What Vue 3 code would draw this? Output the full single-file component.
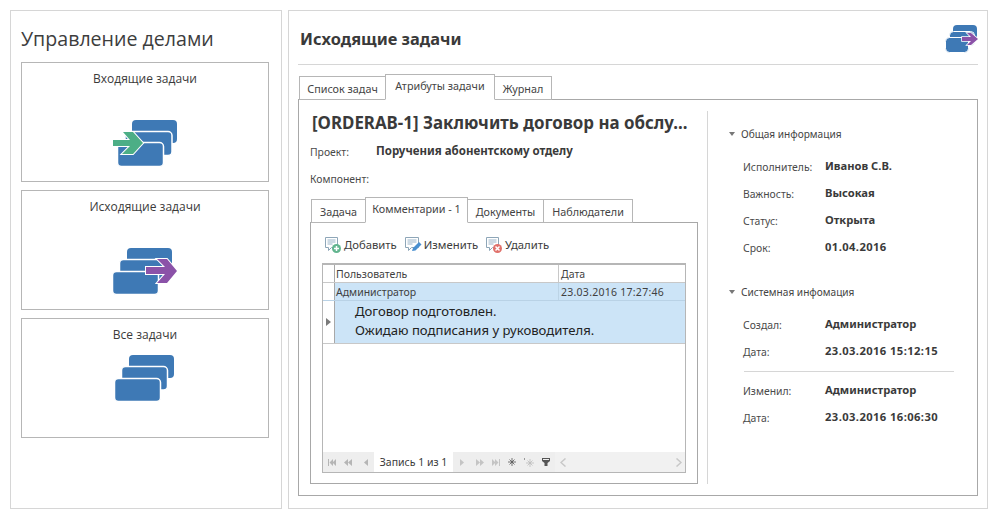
<script setup>
const mainTabs = [
  { label: 'Список задач', w: 87 },
  { label: 'Атрибуты задачи', w: 110, active: true },
  { label: 'Журнал', w: 58 }
]
const innerTabs = [
  { label: 'Задача', w: 55 },
  { label: 'Комментарии - 1', w: 103, active: true },
  { label: 'Документы', w: 77 },
  { label: 'Наблюдатели', w: 90 }
]
const general = [
  ['Исполнитель:', 'Иванов С.В.'],
  ['Важность:', 'Высокая'],
  ['Статус:', 'Открыта'],
  ['Срок:', '01.04.2016', true]
]
const created = [
  ['Создал:', 'Администратор'],
  ['Дата:', '23.03.2016 15:12:15', true]
]
const changed = [
  ['Изменил:', 'Администратор'],
  ['Дата:', '23.03.2016 16:06:30', true]
]
</script>

<template>
  <div class="page">
    <aside class="side">
      <h1 class="side-title">Управление делами</h1>
      <div class="card">
        <div class="card-title">Входящие задачи</div>
        <svg class="card-icon" width="66" height="50" viewBox="112 118 66 50">
          <rect x="132" y="120" width="45" height="23" rx="4" fill="#3e79b5" />
          <rect x="125" y="131.5" width="47" height="24" rx="4" fill="#3e79b5" stroke="#fff" stroke-width="1.5" />
          <rect x="117.5" y="142.5" width="46" height="24" rx="4" fill="#3e79b5" stroke="#fff" stroke-width="1.5" />
          <polygon points="113,140 130,140 123,132 133,132 143,143 133,154 122,154 130,146 113,146" fill="#4cae86" stroke="#fff" stroke-width="2" paint-order="stroke" stroke-linejoin="miter" />
        </svg>
      </div>
      <div class="card">
        <div class="card-title">Исходящие задачи</div>
        <svg class="card-icon" width="66" height="50" viewBox="112 246 66 50">
          <rect x="127" y="248" width="45" height="23" rx="4" fill="#3e79b5" />
          <rect x="119.5" y="259.5" width="46" height="24" rx="4" fill="#3e79b5" stroke="#fff" stroke-width="1.5" />
          <rect x="112.5" y="271.5" width="46" height="23" rx="4" fill="#3e79b5" stroke="#fff" stroke-width="1.5" />
          <polygon points="146,267 165,267 157,259 167,259 177,271 167,283 157,283 165,274 146,274" fill="#8b52a8" stroke="#fff" stroke-width="2" paint-order="stroke" />
        </svg>
      </div>
      <div class="card card-all">
        <div class="card-title">Все задачи</div>
        <svg class="card-icon" width="62" height="48" viewBox="114 354 62 48">
          <rect x="129" y="355" width="45" height="23" rx="4" fill="#3e79b5" />
          <rect x="121.5" y="366.5" width="46" height="23.500" rx="4" fill="#3e79b5" stroke="#fff" stroke-width="1.5" />
          <rect x="114.500" y="378.500" width="46" height="23" rx="4" fill="#3e79b5" stroke="#fff" stroke-width="1.5" />
        </svg>
      </div>
    </aside>

    <main class="content">
      <header class="head">
        <h2 class="head-title">Исходящие задачи</h2>
        <svg width="33" height="28" viewBox="945 25 33 28">
          <rect x="953" y="25" width="24" height="14" rx="4" fill="#3e79b5" />
          <rect x="949.500" y="31.500" width="25" height="14" rx="4" fill="#3e79b5" stroke="#fff" />
          <rect x="945.500" y="37.500" width="23" height="15" rx="4" fill="#3e79b5" stroke="#fff" />
          <polygon points="962,37 971,37 967,33 971,33 978,39 971,45 967,45 971,41 962,41" fill="#8b52a8" stroke="#fff" stroke-width="1.500" paint-order="stroke" />
        </svg>
      </header>

      <nav class="tabs">
        <div v-for="t in mainTabs" :key="t.label" class="tab" :class="{ on: t.active }" :style="{ width: t.w + 'px' }">{{ t.label }}</div>
      </nav>

      <section class="panel">
        <div class="task">
          <h3 class="task-title">[ORDERAB-1] Заключить договор на обслу...</h3>
          <div class="prop prop-project">
            <span class="prop-label">Проект:</span>
            <b class="prop-value">Поручения абонентскому отделу</b>
          </div>
          <div class="prop prop-component">
            <span class="prop-label">Компонент:</span>
          </div>

          <nav class="tabs tabs-inner">
            <div v-for="t in innerTabs" :key="t.label" class="tab" :class="{ on: t.active }" :style="{ width: t.w + 'px' }">{{ t.label }}</div>
          </nav>
          <div class="inner-panel">
            <div class="toolbar">
              <span class="tool">
                <svg width="18" height="18" viewBox="0 0 18 18">
                  <path d="M1.500 1.500h12v10h-6l-3 3v-3h-3z" fill="#fff" stroke="#8ea6b8" />
                  <path d="M3.500 4h8M3.500 6h8M3.500 8h5" stroke="#9bb4c8" />
                  <circle cx="12.500" cy="12.500" r="4.500" fill="#63b58f" />
                  <path d="M10 12.500h5M12.500 10v5" stroke="#fff" stroke-width="1.500" />
                </svg>
                Добавить
              </span>
              <span class="tool">
                <svg width="18" height="18" viewBox="0 0 18 18">
                  <path d="M1.500 1.500h13v10h-7l-3 3v-3h-3z" fill="#fff" stroke="#8ea6b8" />
                  <path d="M3.500 4h9M3.500 6h9M3.500 8h5" stroke="#9bb4c8" />
                  <path d="M8 15l1-3 6-6 2.500 2.500-6 6z" fill="#4a90d0" />
                </svg>
                Изменить
              </span>
              <span class="tool">
                <svg width="18" height="18" viewBox="0 0 18 18">
                  <path d="M1.500 1.500h12v10h-6l-3 3v-3h-3z" fill="#fff" stroke="#8ea6b8" />
                  <path d="M3.500 4h8M3.500 6h8M3.500 8h5" stroke="#9bb4c8" />
                  <circle cx="12.500" cy="12.500" r="4.500" fill="#e0716b" />
                  <path d="M10.500 10.500l4 4M14.500 10.500l-4 4" stroke="#fff" stroke-width="1.500" />
                </svg>
                Удалить
              </span>
            </div>

            <div class="grid">
              <div class="grid-head">
                <div class="ind"></div>
                <div class="col-user">Пользователь</div>
                <div class="col-date">Дата</div>
              </div>
              <div class="grid-row">
                <div class="ind"></div>
                <div class="col-user">Администратор</div>
                <div class="col-date">23.03.2016 17:27:46</div>
              </div>
              <div class="grid-detail">
                <div class="ind ind-cur">
                  <svg width="5" height="8" viewBox="0 0 5 8"><path d="M0 0l5 4-5 4z" fill="#7a7a7a" /></svg>
                </div>
                <div class="detail-text">
                  <div>Договор подготовлен.</div>
                  <div>Ожидаю подписания у руководителя.</div>
                </div>
              </div>
              <div class="grid-space"></div>
              <div class="pager">
                <div class="pager-btns">
                  <svg width="8" height="7" viewBox="0 0 8 7"><path d="M0 0h1v7H0zM5 0v7L1.500 3.500zM8 0v7L4.500 3.500z" fill="#b5b5b5" /></svg>
                  <svg width="8" height="7" viewBox="0 0 8 7"><path d="M4 0v7L0 3.500zM8 0v7L4 3.500z" fill="#b5b5b5" /></svg>
                  <svg class="pg-far" width="4" height="7" viewBox="0 0 4 7"><path d="M4 0v7L0 3.500z" fill="#b5b5b5" /></svg>
                </div>
                <div class="pager-info">Запись 1 из 1</div>
                <div class="pager-btns pager-btns-r">
                  <svg class="pg-next" width="4" height="7" viewBox="0 0 4 7"><path d="M0 0v7l4-3.500z" fill="#c4c4c4" /></svg>
                  <svg width="8" height="7" viewBox="0 0 8 7"><path d="M0 0v7l4-3.500zM4 0v7l4-3.500z" fill="#c4c4c4" /></svg>
                  <svg width="8" height="7" viewBox="0 0 8 7"><path d="M0 0v7l3.500-3.500zM3 0v7l3.500-3.500zM7 0h1v7H7z" fill="#c4c4c4" /></svg>
                  <svg width="8" height="8" viewBox="0 0 8 8"><path d="M4 0v8M0 4h8M1.500 1.500l5 5M6.500 1.500l-5 5" stroke="#555" stroke-width=".8" /></svg>
                  <svg width="10" height="9" viewBox="0 0 10 9"><path d="M6 1v8M2 5h8M3.500 2.500l5 5M8.500 2.500l-5 5" stroke="#bbb" stroke-width=".8" /><path d="M.5 0v2" stroke="#999" /></svg>
                  <svg width="8" height="8" viewBox="0 0 8 8"><path d="M0 0h8v3L5.500 5v3h-3V5L0 3z" fill="#555" /><path d="M1 1.500h6" stroke="#eee" /></svg>
                </div>
                <div class="pager-scroll">
                  <svg width="6" height="9" viewBox="0 0 6 9"><path d="M5.500 .5l-4.500 4 4.500 4" fill="none" stroke="#c8c8c8" stroke-width="1.500" /></svg>
                  <svg width="6" height="9" viewBox="0 0 6 9"><path d="M.5 .5l4.500 4-4.500 4" fill="none" stroke="#c8c8c8" stroke-width="1.500" /></svg>
                </div>
              </div>
            </div>
          </div>
        </div>

        <div class="info">
          <div class="group-title">Общая информация</div>
          <div v-for="r in general" :key="r[0]" class="info-row">
            <span class="info-label">{{ r[0] }}</span>
            <b class="info-value" :class="{ num: r[2] }">{{ r[1] }}</b>
          </div>
          <div class="group-title group-title-2">Системная инфомация</div>
          <div v-for="r in created" :key="r[0]" class="info-row">
            <span class="info-label">{{ r[0] }}</span>
            <b class="info-value" :class="{ num: r[2] }">{{ r[1] }}</b>
          </div>
          <hr class="info-sep" />
          <div v-for="r in changed" :key="r[0]" class="info-row">
            <span class="info-label">{{ r[0] }}</span>
            <b class="info-value" :class="{ num: r[2] }">{{ r[1] }}</b>
          </div>
        </div>
      </section>
    </main>
  </div>
</template>

<style>
html, body { margin: 0; background: #fff; }
</style>

<style scoped>
* { box-sizing: border-box; }
.page {
  width: 998px;
  height: 519px;
  padding: 10px;
  display: flex;
  gap: 6px;
  font-family: "Noto Sans", "DejaVu Sans", sans-serif;
  font-size: 10.5px;
  color: #3f3f3f;
  background: #fff;
  overflow: hidden;
}
.side {
  width: 272px;
  height: 499px;
  border: 1px solid #d6d6d6;
  padding: 0 12px 0 10px;
}
.side-title {
  margin: 0;
  height: 51px;
  padding-top: 14px;
  font: 400 19.6px/27px "Open Sans", sans-serif;
  color: #3d3d3d;
}
.card {
  width: 248px;
  height: 120px;
  margin-bottom: 8px;
  border: 1px solid #b6b6b6;
  display: flex;
  flex-direction: column;
  align-items: center;
}
.card-title {
  margin-top: 7px;
  height: 18px;
  font: 400 12px/18px "Open Sans", sans-serif;
  color: #3a3a3a;
}
.card-icon { margin-top: 30px; flex: none; }
.card-all .card-icon { margin-top: 10px; }

.content {
  width: 700px;
  height: 499px;
  border: 1px solid #d6d6d6;
  padding: 0 9px;
}
.head {
  height: 54px;
  border-bottom: 1px solid #d6d6d6;
  display: flex;
  align-items: flex-start;
  justify-content: space-between;
  padding-top: 14px;
  margin-bottom: 9px;
}
.head-title {
  margin: 3px 0 0 2px;
  font: 700 16.4px/22px "Noto Sans", sans-serif;
  color: #3a3a3a;
}
.tabs {
  display: flex;
  align-items: flex-end;
  height: 26px;
  padding-left: 1px;
  position: relative;
  z-index: 1;
  margin-bottom: -1px;
}
.tab {
  height: 24px;
  margin-right: -1px;
  border: 1px solid #b6b6b6;
  background: #fff;
  text-align: center;
  line-height: 23px;
  color: #444;
  font-size: 10.8px;
}
.tab.on {
  height: 26px;
  border-bottom-color: #fff;
  line-height: 22px;
  position: relative;
  z-index: 1;
}
.panel {
  height: 397px;
  border: 1px solid #a8a8a8;
  display: flex;
  padding: 11px 0;
}
.task {
  width: 409px;
  padding-left: 11px;
  border-right: 1px solid #d6d6d6;
  height: 373px;
}
.task-title {
  margin: 0 0 0 2px;
  height: 23px;
  font: 700 16.9px/23px "Noto Sans", sans-serif;
  color: #3a3a3a;
  white-space: nowrap;
}
.prop { display: flex; height: 27px; align-items: center; }
.prop-project { margin-top: 4px; }
.prop-label { width: 66px; color: #4a4a4a; font-size: 10.4px; }
.prop-value { font-weight: 700; font-size: 11.5px; color: #3a3a3a; position: relative; top: -1px; }
.tabs-inner { margin-top: 5px; height: 26px; padding-left: 1px; }
.inner-panel {
  width: 388px;
  height: 262px;
  border: 1px solid #a8a8a8;
  padding: 13px 11px 0;
}
.toolbar { display: flex; height: 27px; padding-left: 2px; gap: 7px; }
.tool { display: flex; align-items: flex-start; gap: 2px; line-height: 18px; font-size: 11.3px; color: #3d3d3d; }
.grid {
  width: 364px;
  height: 210px;
  border: 1px solid #b6b6b6;
  border-top-width: 2px;
  display: flex;
  flex-direction: column;
}
.grid-head, .grid-row { display: flex; height: 18px; flex: none; }
.grid-head { border-bottom: 1px solid #c8c8c8; }
.ind { width: 12px; flex: none; border-right: 1px solid #a8a8a8; }
.ind-cur { display: flex; align-items: center; justify-content: center; }
.col-user { width: 223px; padding-left: 1px; line-height: 18px; }
.col-date { flex: 1; padding-left: 2px; line-height: 18px; border-left: 1px solid #c8c8c8; }
.grid-row .col-user, .grid-row .col-date { background: #cce4f7; }
.grid-row .col-user { padding-left: 1px; }
.grid-row .col-date { border-left-color: #bcd4e6; padding-left: 2px; letter-spacing: .26px; }
.grid-row { border-bottom: 1px solid #b9d2e6; }
.grid-detail { display: flex; height: 43px; flex: none; border-bottom: 1px solid #c8c8c8; }
.detail-text {
  flex: 1;
  background: #cce4f7;
  padding: 1px 0 0 20px;
  font-size: 13.1px;
  line-height: 19px;
  color: #222;
}
.grid-space { flex: 1; }
.pager { display: flex; height: 20px; background: #eeeeee; flex: none; align-items: center; }
.pager-btns { display: flex; align-items: center; gap: 8px; padding-left: 5px; width: 51px; }
.pg-far { margin-left: 4px; }
.pg-next { margin-right: 4px; }
.pager-info { width: 79px; height: 100%; background: #fff; line-height: 20px; text-align: center; color: #3a3a3a; }
.pager-btns-r { width: 102px; padding-left: 7px; }
.pager-scroll { flex: 1; height: 100%; background: #f1f1f1; display: flex; align-items: center; justify-content: space-between; padding: 0 3px 0 5px; }
.info { flex: 1; padding: 15px 0 0 21px; }
.group-title {
  height: 16px;
  line-height: 16px;
  padding-left: 12px;
  position: relative;
  color: #444;
  font-size: 10.1px;
  margin-bottom: 11px;
}
.group-title::before {
  content: "";
  position: absolute;
  left: 0;
  top: 6px;
  border-left: 3.500px solid transparent;
  border-right: 3.500px solid transparent;
  border-top: 4px solid #777;
}
.group-title-2 { margin-top: 23px; margin-bottom: 11px; }
.info-row { display: flex; height: 27px; padding-left: 14px; align-items: center; }
.info-label { width: 82px; color: #4a4a4a; font-size: 10.4px; }
.info-value { font-weight: 700; font-size: 11.2px; color: #3a3a3a; position: relative; top: -1px; }
.info-value.num { letter-spacing: .42px; }
.info-sep {
  width: 210px;
  margin: 6px 0 5px 15px;
  border: 0;
  border-top: 1px solid #d6d6d6;
}
</style>
